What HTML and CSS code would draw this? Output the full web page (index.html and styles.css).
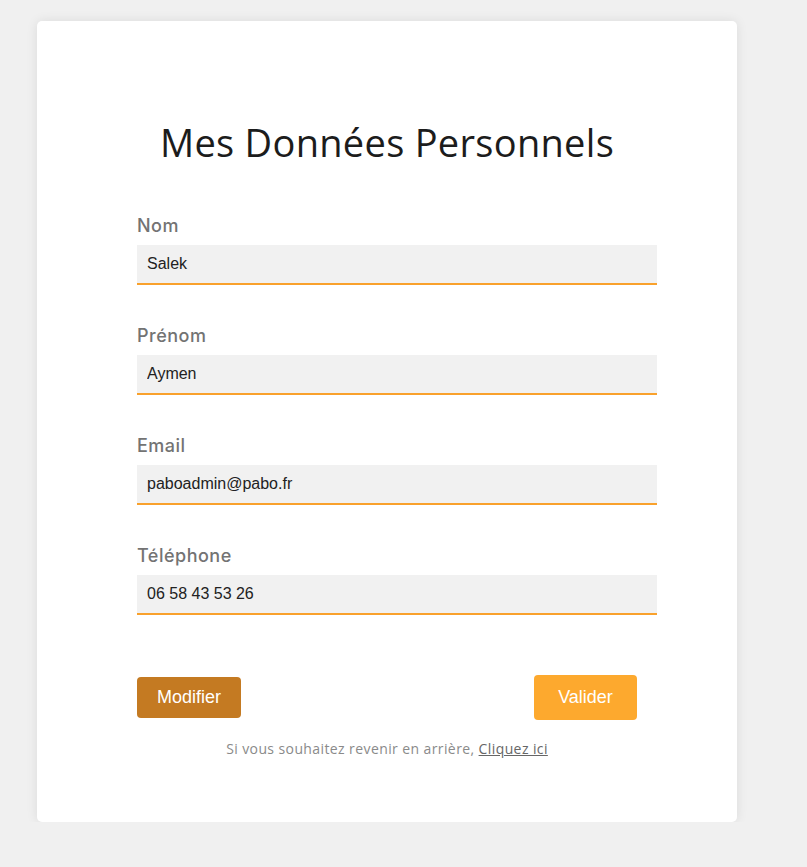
FILE: index.html
```html
<!DOCTYPE html>
<html lang="fr">
<head>
<meta charset="utf-8">
<title>Mes Données Personnels</title>
<link rel="stylesheet" href="styles.css">
</head>
<body>
<main class="card">
  <h1 class="title">Mes Données Personnels</h1>
  <form class="form">
    <div class="field">
      <label class="label" for="nom">Nom</label>
      <input class="input" id="nom" type="text" value="Salek">
    </div>
    <div class="field">
      <label class="label" for="prenom">Prénom</label>
      <input class="input" id="prenom" type="text" value="Aymen">
    </div>
    <div class="field">
      <label class="label" for="email">Email</label>
      <input class="input" id="email" type="text" value="paboadmin@pabo.fr">
    </div>
    <div class="field">
      <label class="label" for="tel">Téléphone</label>
      <input class="input" id="tel" type="text" value="06 58 43 53 26">
    </div>
    <div class="actions">
      <button type="button" class="btn btn-modify">Modifier</button>
      <button type="button" class="btn btn-validate">Valider</button>
    </div>
    <p class="back">Si vous souhaitez revenir en arrière, <a class="back-link" href="#">Cliquez ici</a></p>
  </form>
</main>
</body>
</html>
```

FILE: styles.css
```css
* { box-sizing: border-box; }

html, body {
  margin: 0;
  padding: 0;
  background: #f0f0f0;
}

body {
  font-family: "Open Sans", "Noto Sans", sans-serif;
  padding: 21px 0 0 37px;
}

.card {
  width: 700px;
  height: 801px;
  background: #ffffff;
  border-radius: 5px;
  box-shadow: 0 0 12px rgba(0, 0, 0, 0.09);
  padding: 99px 80px 0 100px;
}

.title {
  margin: 0 0 49px;
  font-size: 38px;
  line-height: 44px;
  letter-spacing: 0.3px;
  font-weight: 400;
  color: #1c1c1c;
  text-align: center;
  padding-right: 20px;
}

.form {
  width: 520px;
  display: flex;
  flex-direction: column;
}

.field {
  display: flex;
  flex-direction: column;
  margin-bottom: 38px;
}

.label {
  font-family: Inter, "Open Sans", sans-serif;
  font-size: 18px;
  line-height: 22px;
  letter-spacing: 0.5px;
  font-weight: 500;
  color: #737373;
  margin: 2px 0 8px;
}

.input {
  height: 40px;
  border: 0;
  border-bottom: 2px solid #f9a12c;
  background: #f1f1f1;
  padding: 0 10px;
  font-family: "Liberation Sans", Arial, sans-serif;
  font-size: 16px;
  color: #222;
  outline: none;
}

.actions {
  margin-top: 22px;
  display: flex;
  justify-content: space-between;
  align-items: center;
  padding-right: 20px;
}

.btn {
  border: 0;
  border-radius: 4px;
  color: #ffffff;
  font-family: "Liberation Sans", Arial, sans-serif;
  font-size: 18px;
  padding: 0;
  cursor: pointer;
}

.btn-modify {
  width: 104px;
  height: 41px;
  background: #c47a22;
}

.btn-validate {
  width: 103px;
  height: 45px;
  background: #fda92e;
}

.back {
  margin: 20px 0 0;
  padding-right: 20px;
  text-align: center;
  font-size: 14px;
  line-height: 18px;
  letter-spacing: 0.4px;
  color: #8a8a8a;
}

.back-link {
  color: #666;
  text-decoration: underline;
}
```
